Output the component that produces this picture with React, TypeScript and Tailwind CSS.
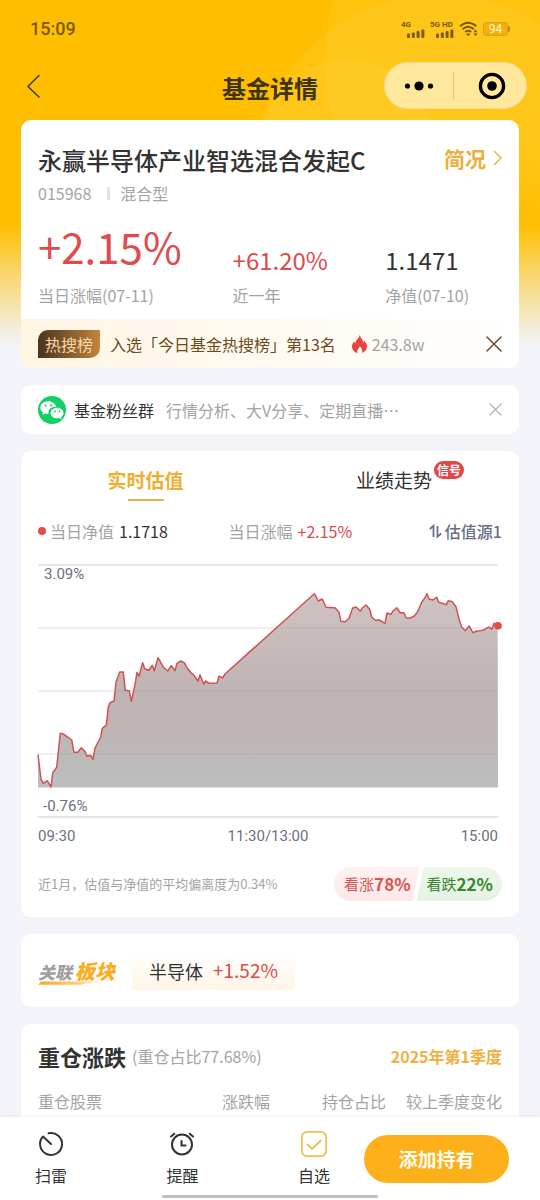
import type { ReactNode } from "react";

const linePoints: [number, number][] = [
  [0, 190.7], [3, 215], [5.3, 219.3], [9.3, 216.7], [13, 223], [14.7, 209], [18.7, 203.3], [22.3, 169.3],
  [26, 170.3], [33.7, 176], [36, 188.3], [39.7, 188.3], [43.3, 183.7], [47, 187.3], [49, 192.3], [52.7, 191.3],
  [55, 195.3], [57, 184], [62.7, 173], [64.3, 164.3], [68.3, 161], [70.3, 143.3], [72, 138.7], [76, 137],
  [78, 118.3], [81.7, 108], [85.3, 108], [87.3, 126.3], [91.3, 126.7], [93.3, 137.3], [97, 120.7], [99, 108.3],
  [101, 112.3], [104.7, 98.7], [106.7, 104.7], [110.7, 106.3], [114.3, 101.3], [116.3, 106.7], [120, 93.7],
  [125.7, 103.7], [129.7, 107], [133.3, 101.7], [137, 106.7], [139, 99.3], [142.7, 97], [146.3, 98.7],
  [149, 103.7], [152.7, 108.3], [156.3, 111.7], [160, 117], [162, 110.7], [165.7, 120], [167.7, 117],
  [171.3, 119.3], [179, 119], [181, 112.3], [184.7, 113.7], [187, 110], [276.3, 29.7], [280.3, 37],
  [284.3, 35], [288, 43.3], [297, 43.7], [301, 48.3], [303, 57.3], [307, 57.7], [311, 54.3], [314.7, 44],
  [318.3, 43], [322.3, 47.3], [324.3, 44], [328, 41], [331.7, 45.3], [333.7, 53], [337.3, 56.3], [341.3, 56],
  [347, 59.3], [349, 49], [353, 50.3], [354.7, 47.3], [358.7, 43.7], [362.3, 48.7], [366, 48.7], [368, 53.7],
  [372, 54], [376, 52.3], [379.7, 47.7], [383.7, 38.3], [387.3, 33.3], [389, 29.7], [391, 35], [395, 36],
  [398.7, 33.3], [400.7, 38.3], [408.3, 40.7], [410.3, 36.7], [414.3, 37.7], [418, 42.7], [421.3, 56],
  [423.7, 63], [427.3, 66.7], [431, 62], [435, 68.7], [438.7, 67], [442.7, 66.7], [446.3, 65.7], [450.3, 63],
  [454, 65], [456, 59.3], [459.7, 61.7],
];

const path = "M" + linePoints.map(([x, y]) => `${x} ${y}`).join("L");

function Card({ children, className = "" }: { children: ReactNode; className?: string }) {
  return <section className={`rounded-[10px] bg-white ${className}`}>{children}</section>;
}

function Cross({ className }: { className: string }) {
  return (
    <svg viewBox="0 0 16 16" className={className} fill="none" stroke="currentColor" strokeLinecap="round">
      <path d="M1 1l14 14M15 1L1 15" />
    </svg>
  );
}

function Signal() {
  return (
    <svg width="18" height="9" viewBox="0 0 18 9" fill="currentColor">
      <rect x="0" y="4.5" width="3" height="4.5" rx="1" />
      <rect x="4.8" y="3.5" width="3" height="5.5" rx="1" />
      <rect x="9.6" y="2" width="3" height="7" rx="1" />
      <rect x="14.4" y="0.5" width="3" height="8.5" rx="1" />
    </svg>
  );
}

function StatusBar() {
  return (
    <div className="flex h-[57px] items-center justify-between px-[30px] text-[#7a5a08]">
      <span className="font-[Roboto] text-lg font-medium">15:09</span>
      <div className="flex items-center gap-[5px] font-[Roboto] text-[8px] leading-[9px] font-bold">
        <div className="flex flex-col">
          <span>4G</span>
          <span className="pl-[6px]"><Signal /></span>
        </div>
        <div className="flex flex-col">
          <span>5G HD</span>
          <span className="pl-[6px]"><Signal /></span>
        </div>
        <svg width="19" height="16" viewBox="0 0 19 16" fill="none" stroke="currentColor" strokeWidth="2">
          <path d="M1 5.2Q9 -1.8 17.4 5.2M3.6 8.2Q9 3.4 14.8 8.2M6.2 11Q9 8.5 12.2 11" />
          <path d="M9.2 15.2l-2-2.2q2-1.4 4 0z" fill="currentColor" stroke="none" />
          <path d="M16.5 8.6l2 2.6h-4zM16.5 15l2-2.6h-4z" fill="currentColor" stroke="none" />
        </svg>
        <div className="flex items-center">
          <span className="flex h-[14px] w-[25px] items-center justify-center rounded-[3px] border border-[#dba112] bg-[#f7ae08] text-xs font-normal text-[#fffbd0]">94</span>
          <span className="h-[6px] w-[2px] rounded-r-sm bg-[#c08a08]" />
        </div>
      </div>
    </div>
  );
}

function TitleBar() {
  return (
    <header className="grid h-[63px] grid-cols-[1fr_auto_1fr] items-center px-[13px] pb-[6px]">
      <button aria-label="返回" className="justify-self-start pl-[13px] text-[#4a3a08]">
        <svg width="15" height="24" viewBox="0 0 15 24" fill="none" stroke="currentColor" strokeWidth="1.6" strokeLinecap="round">
          <path d="M13 1.5L2 12.5L13 23" />
        </svg>
      </button>
      <h1 className="pt-1 text-2xl font-bold text-[#40340c]">基金详情</h1>
      <div className="flex h-[47px] w-[143px] items-center justify-self-end rounded-full border border-[#f0dc94] bg-[#ffe79c]">
        <button aria-label="更多" className="flex flex-1 justify-center">
          <svg width="30" height="10" viewBox="0 0 30 10">
            <circle cx="3.5" cy="5" r="2.6" />
            <circle cx="15" cy="5" r="4.6" />
            <circle cx="26.5" cy="5" r="2.6" />
          </svg>
        </button>
        <span className="h-7 w-px bg-[#e0c67c]" />
        <button aria-label="关闭" className="flex flex-1 justify-center pl-1">
          <svg width="28" height="28" viewBox="0 0 28 28">
            <circle cx="14" cy="14" r="11.6" fill="none" stroke="#000" strokeWidth="3.3" />
            <circle cx="14" cy="14" r="4.8" />
          </svg>
        </button>
      </div>
    </header>
  );
}

function Summary() {
  return (
    <Card className="overflow-hidden">
      <div className="px-[17px] pt-6 pb-[14px]">
        <div className="flex items-start justify-between">
          <h2 className="text-2xl leading-8 font-medium text-[#333]">永赢半导体产业智选混合发起C</h2>
          <a href="#profile" className="flex items-center gap-[7px] text-[21px] leading-7 font-bold text-[#ecae3c]">
            简况
            <svg width="9" height="16" viewBox="0 0 9 16" fill="none" stroke="currentColor" strokeWidth="1.4">
              <path d="M1 1l7 7l-7 7" />
            </svg>
          </a>
        </div>
        <div className="mt-[7px] flex items-center text-base leading-5 text-[#a3a3a3]">
          <span>015968</span>
          <span className="mr-[10px] ml-4 h-[13px] w-[3px] bg-[#e2e2e2]" />
          <span>混合型</span>
        </div>
        <dl className="mt-[15px] grid grid-cols-[195fr_153fr_117fr] items-end text-[#a3a3a3]">
          <div className="flex flex-col-reverse gap-[11px]">
            <dt className="text-base leading-5">当日涨幅(07-11)</dt>
            <dd className="text-[42px] leading-[56px] text-[#e14b4b]">+2.15%</dd>
          </div>
          <div className="flex flex-col-reverse gap-[11px]">
            <dt className="text-base leading-5">近一年</dt>
            <dd className="text-2xl leading-7 text-[#dc4a4c]">+61.20%</dd>
          </div>
          <div className="flex flex-col-reverse gap-[11px]">
            <dt className="text-base leading-5">净值(07-10)</dt>
            <dd className="text-2xl leading-7 text-[#333]">1.1471</dd>
          </div>
        </dl>
      </div>
      <div className="flex h-[49px] items-center bg-linear-to-r from-[#fff5e3] to-white px-[17px]">
        <span className="rounded-tl-[10px] rounded-br-[10px] bg-linear-to-r from-[#4a3420] to-[#c5843c] px-[7px] text-base leading-7 text-[#fbd9a4]">热搜榜</span>
        <span className="ml-[10px] text-base text-[#6d4a1c]">入选「今日基金热搜榜」第13名</span>
        <svg width="15" height="18" viewBox="0 0 15 18" className="ml-4">
          <path fill="#e8443f" d="M7.6 0C8.4 3.2 11 4.4 11.4 7.4C12 6.8 12.2 6 12.2 5.4C14 7.4 15 9.3 15 11.6C15 14.6 12.9 17 10 17.9C10.8 15.2 9.6 13 7.7 11.3C7.5 13.3 4.4 14.6 5.6 17.9C2.4 17.2 0 14.8 0 11.4C0 9.4 1 7.8 2 6.4C2.3 7.2 2.7 7.9 3.4 8.2C3.4 5 7.2 3.6 7.6 0Z" />
        </svg>
        <span className="ml-[5px] text-base text-[#a3a3a3]">243.8w</span>
        <button aria-label="关闭热搜" className="ml-auto text-[#6b4b24]">
          <Cross className="size-4 stroke-[1.5]" />
        </button>
      </div>
    </Card>
  );
}

function FanGroup() {
  return (
    <Card className="flex h-[49px] items-center px-[17px]">
      <svg width="28" height="28" viewBox="0 0 28 28">
        <circle cx="14" cy="14" r="14" fill="#12cf66" />
        <path fill="#fff" d="M10.3 5.2c-4.6 0-8 2.8-8 6.4 0 2.1 1.1 3.8 2.9 5l-.8 2.5 2.9-1.5c1.1.3 2 .4 3.3.4-1.1-4.3 2.5-7.5 7.5-7.3C17.3 7.5 14.2 5.2 10.3 5.2z" />
        <path fill="#fff" d="M25.5 17c0-3-2.9-5.3-6.4-5.3s-6.5 2.3-6.5 5.3 2.9 5.3 6.5 5.3c.8 0 1.6-.1 2.3-.3l2.3 1.2-.6-2c1.5-1 2.4-2.500 2.4-4.2z" />
        <g fill="#12cf66">
          <circle cx="7.6" cy="9.6" r="1" />
          <circle cx="13" cy="9.6" r="1" />
          <circle cx="17" cy="15.5" r=".9" />
          <circle cx="21.3" cy="15.5" r=".9" />
        </g>
      </svg>
      <span className="ml-2 text-base text-[#333]">基金粉丝群</span>
      <span className="ml-[12px] text-base text-[#a3a3a3]">行情分析、大V分享、定期直播…</span>
      <button aria-label="关闭粉丝群" className="ml-auto text-[#a3a3a3]">
        <Cross className="size-[13px] stroke-[1.3]" />
      </button>
    </Card>
  );
}

function Chart() {
  return (
    <div className="relative mr-1">
      <svg viewBox="0 0 460 254" className="block h-auto w-full overflow-visible" role="img" aria-label="实时估值走势">
        <defs>
          <linearGradient id="area" gradientUnits="userSpaceOnUse" x1="0" y1="29" x2="0" y2="223">
            <stop offset="0" stopColor="#cfc2c3" />
            <stop offset="0.5" stopColor="#c0b3b3" />
            <stop offset="0.75" stopColor="#beb6b6" />
            <stop offset="0.9" stopColor="#bcbbbb" />
            <stop offset="1" stopColor="#bebebe" />
          </linearGradient>
        </defs>
        <path d="M0 1H460M0 253H460" stroke="#dcdcdc" strokeWidth="1.4" />
        <path d="M0 64H460M0 127H460M0 190H460" stroke="#ebebeb" strokeWidth="1.2" />
        <path d={path + "L460 223L0 223Z"} fill="url(#area)" />
        <path d="M0 64H460M0 127H460M0 190H460" stroke="#8a7c7c" strokeOpacity="0.1" strokeWidth="1.2" />
        <path d="M0 223.5H460" stroke="#dedede" />
        <path d={path} fill="none" stroke="#cf5353" strokeWidth="1.5" strokeLinejoin="round" />
        <circle cx="460" cy="61.7" r="3.8" fill="#e84848" />
      </svg>
      <span className="absolute top-0 left-[6px] font-[Roboto] text-[15px] leading-5 text-[#6b7080]">3.09%</span>
      <span className="absolute bottom-[2px] left-[5px] font-[Roboto] text-[15px] leading-5 text-[#6b7080]">-0.76%</span>
    </div>
  );
}

function Valuation() {
  return (
    <Card className="px-[17px] pb-4">
      <div className="grid grid-cols-2 text-center" role="tablist">
        <button role="tab" aria-selected="true" className="flex flex-col items-center pt-[15px] pr-[17px] text-[19px] leading-7 font-bold text-[#f0ae30]">
          实时估值
          <span className="mt-[5px] h-[2px] w-9 bg-[#e5b548]" />
        </button>
        <button role="tab" aria-selected="false" className="flex justify-center pt-[15px] pl-[16px] text-[19px] leading-7 text-[#333]">
          <span className="relative">
            业绩走势
            <span className="absolute -top-[5px] left-full ml-[2px] rounded-full bg-[#e04848] px-[3px] text-xs leading-[18px] font-bold whitespace-nowrap text-white">信号</span>
          </span>
        </button>
      </div>
      <div className="mt-[18px] flex items-center justify-between text-base leading-6 text-[#a3a3a3]">
        <span className="flex items-center">
          <span className="mr-1 size-2 rounded-full bg-[#e84848]" />
          当日净值<span className="ml-[5px] text-[#333]">1.1718</span>
        </span>
        <span className="pr-4">
          当日涨幅<span className="ml-[5px] text-[#dc4a4c]">+2.15%</span>
        </span>
        <button className="flex items-center font-medium text-[#686f87]">
          <svg width="13" height="15" viewBox="0 0 13 15" className="mr-[3px]" fill="none" stroke="currentColor" strokeWidth="1.8">
            <path d="M0.800 5L4.500 1.800V13M8.500 2V12.600L12.200 9.500" />
          </svg>
          估值源1
        </button>
      </div>
      <div className="mt-[21px]">
        <Chart />
      </div>
      <div className="mt-[8px] mr-1 flex justify-between font-[Roboto] text-[15px] leading-5 text-[#6b7080]">
        <span>09:30</span>
        <span>11:30/13:00</span>
        <span>15:00</span>
      </div>
      <div className="mt-[21px] flex items-center justify-between">
        <span className="text-[13px] text-[#a3a3a3]">近1月，估值与净值的平均偏离度为0.34%</span>
        <div className="flex text-[15px] leading-[34px]">
          <button className="flex rounded-l-full bg-linear-to-b from-[#fff1f0] to-[#fde8e8] pr-[9px] pl-[10px] text-[#d9534f] [clip-path:polygon(0_0,100%_0,calc(100%_-_7px)_100%,0_100%)]">
            看涨<b className="text-[17px] leading-[34px] font-bold">78%</b>
          </button>
          <button className="-ml-[3px] flex rounded-r-full bg-linear-to-b from-[#edf7ec] to-[#e4f2e4] pr-[9px] pl-[10px] text-[#37872c] [clip-path:polygon(7px_0,100%_0,100%_100%,0_100%)]">
            看跌<b className="text-[17px] leading-[34px] font-bold">22%</b>
          </button>
        </div>
      </div>
    </Card>
  );
}

function Sector() {
  return (
    <Card className="flex h-[73px] items-center px-[17px]">
      <div className="relative flex items-baseline font-black italic">
        <span className="text-[17px] text-[#a0a0a0]">关联</span>
        <span className="ml-[3px] text-xl text-[#fbad20]">板块</span>
        <svg viewBox="0 0 78 4" className="absolute bottom-0 left-0 w-full">
          <defs>
            <linearGradient id="swoosh">
              <stop offset="0" stopColor="#f8a91c" />
              <stop offset="1" stopColor="#fff2d0" />
            </linearGradient>
          </defs>
          <path d="M3 0.5H76Q50 1 44 3.8H0Z" fill="url(#swoosh)" />
        </svg>
      </div>
      <a href="#sector" className="ml-[17px] flex h-[38px] items-center gap-[10px] rounded bg-linear-to-b from-white to-[#fff5e6] px-[17px]">
        <span className="text-lg text-[#333]">半导体</span>
        <span className="text-[19px] text-[#dc4a4c]">+1.52%</span>
      </a>
    </Card>
  );
}

function Holdings() {
  return (
    <Card className="px-[17px] pt-4 pb-8">
      <div className="flex items-center">
        <h2 className="text-[22px] leading-8 font-bold text-[#333]">重仓涨跌</h2>
        <span className="ml-[6px] text-base text-[#a3a3a3]">(重仓占比77.68%)</span>
        <button className="ml-auto text-base font-bold text-[#efb040]">2025年第1季度</button>
      </div>
      <table className="mt-[19px] w-full table-fixed text-base leading-5 text-[#a3a3a3]">
        <thead>
          <tr className="text-right">
            <th className="w-[28%] text-left font-normal">重仓股票</th>
            <th className="w-[22%] font-normal">涨跌幅</th>
            <th className="w-[25%] font-normal">持仓占比</th>
            <th className="w-[25%] font-normal whitespace-nowrap">较上季度变化</th>
          </tr>
        </thead>
      </table>
    </Card>
  );
}

function BottomBar() {
  return (
    <nav className="relative flex shrink-0 items-start bg-white pr-[31px] pb-[13px] pl-[35px] shadow-[0_-1px_3px_rgba(0,0,0,0.06)]">
      <div className="flex flex-1 justify-between pt-[13px] text-base leading-6 text-[#333]">
        <button className="flex flex-col items-center gap-[5px]">
          <svg width="28" height="28" viewBox="0 0 28 28" fill="none" stroke="currentColor" strokeWidth="2" strokeLinecap="round">
            <path d="M11.500 3.300A11 11 0 1 1 6 6.500L14 14" strokeLinejoin="round" />
          </svg>
          扫雷
        </button>
        <button className="flex flex-col items-center gap-[5px]">
          <svg width="28" height="28" viewBox="0 0 28 28" fill="none" stroke="currentColor" strokeWidth="2" strokeLinecap="round">
            <circle cx="14" cy="14.5" r="10" />
            <path d="M13.5 11V15.5H17.5M3 6.500L6.300 3.700M25 6.500L21.700 3.700" />
          </svg>
          提醒
        </button>
        <button className="flex flex-col items-center gap-[5px]">
          <svg width="28" height="28" viewBox="0 0 28 28" fill="none" stroke="#ecc04c" strokeWidth="1.8" strokeLinecap="round">
            <rect x="1.8" y="1.8" width="24.4" height="24.4" rx="5.5" />
            <path d="M7.5 14.5L12 19L20.8 10.5" />
          </svg>
          自选
        </button>
      </div>
      <button className="mt-[18px] ml-[34px] h-12 w-[145px] rounded-full bg-[#fdb01a] text-[19px] font-bold text-[#fffdf2]">添加持有</button>
      <span className="absolute bottom-[2px] left-[30%] h-[3px] w-2/5 rounded-full bg-[#bfbfbf]" />
    </nav>
  );
}

export default function App() {
  return (
    <div className="flex h-screen flex-col overflow-hidden bg-[#f3f4f9] font-['Noto_Sans_CJK_SC',sans-serif]">
      <div className="relative isolate min-h-0 flex-1 overflow-y-auto bg-[linear-gradient(180deg,#ffbf00_0px,#ffbf00_225px,#f9d97a_280px,#f3f4f9_345px)] [scrollbar-width:none]">
        <svg width="330" height="225" viewBox="0 0 330 225" className="absolute top-0 right-0 -z-10" fill="url(#glow)">
          <defs>
            <linearGradient id="glow" gradientUnits="userSpaceOnUse" x1="0" y1="0" x2="0" y2="225">
              <stop offset="0" stopColor="#ffe070" stopOpacity="0.12" />
              <stop offset="0.6" stopColor="#ffe070" stopOpacity="0.12" />
              <stop offset="1" stopColor="#ffe070" stopOpacity="0" />
            </linearGradient>
          </defs>
          <circle cx="330" cy="60" r="215" />
          <circle cx="229" cy="180" r="185" />
          <circle cx="135" cy="150" r="90" />
        </svg>
        <StatusBar />
        <TitleBar />
        <main className="flex flex-col gap-[17px] px-[21px]">
          <Summary />
          <FanGroup />
          <Valuation />
          <Sector />
          <Holdings />
        </main>
      </div>
      <BottomBar />
    </div>
  );
}
